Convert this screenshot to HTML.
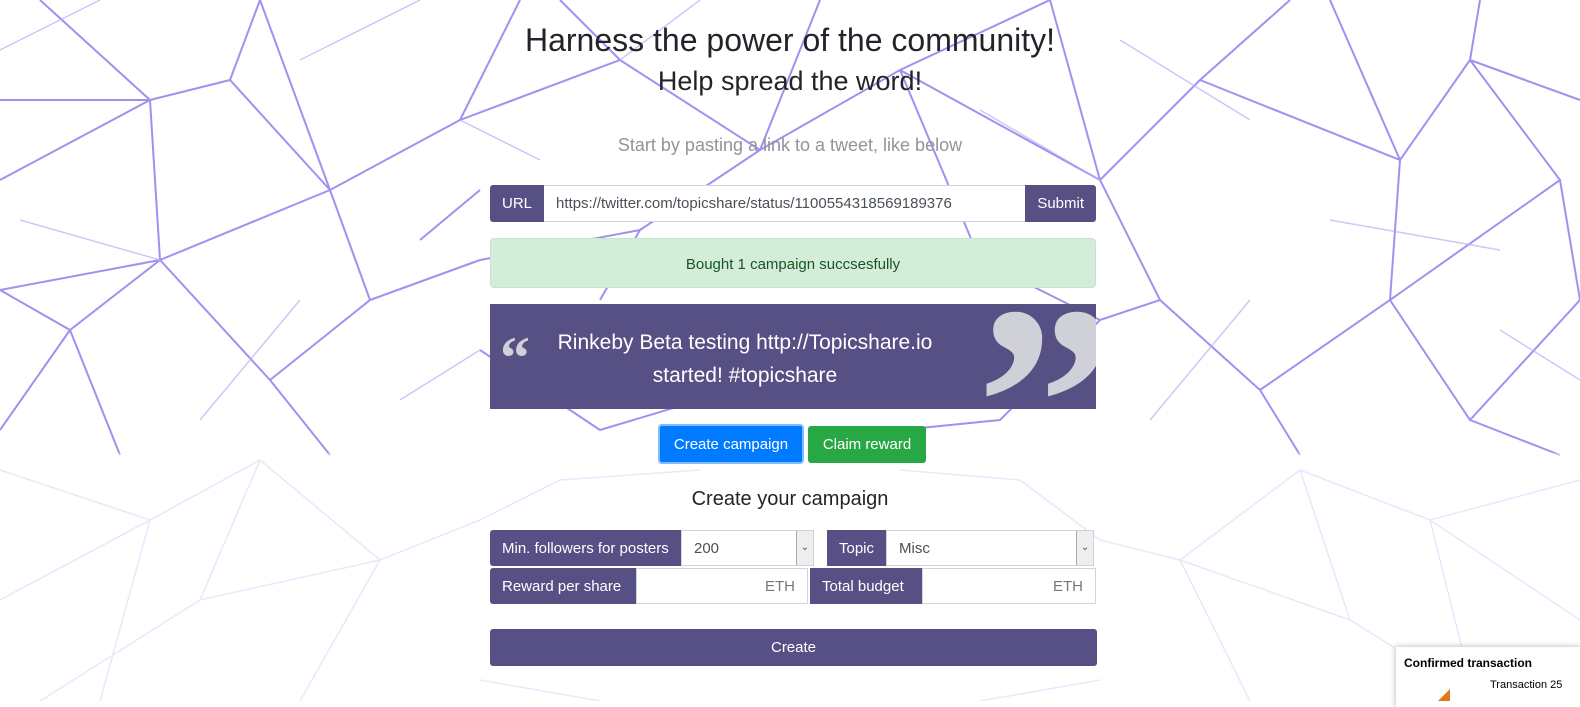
<!DOCTYPE html>
<html><head><meta charset="utf-8"><style>
body{margin:0;width:1580px;height:701px;overflow:hidden;font-family:"Liberation Sans",sans-serif;background:#fff;position:relative}
svg.bg{position:absolute;left:0;top:0}
.c{position:absolute;left:0;width:1580px;text-align:center;color:#212529}
.grp{position:absolute;display:flex;height:36px;font-size:15px}
.lab{background:#575084;color:#fff;display:flex;align-items:center;padding:0 12px;border-radius:3px 0 0 3px}
.inp{background:#fff;border:1px solid #ced4da;display:flex;align-items:center;padding:0 12px;color:#495057;box-sizing:border-box}
</style></head><body>
<svg class="bg" width="1580" height="701" viewBox="0 0 1580 701">
<g stroke="#8d80ee" stroke-width="2" fill="none" opacity="0.85">
<path d="M0 100L150 100L230 80L330 190L370 300L270 380L160 260L0 290M150 100L160 260L70 330L0 290M230 80L260 0M330 190L460 120L520 0M370 300L480 260M270 380L330 455M70 330L120 455M160 260L330 190M0 180L150 100M40 0L150 100"/>
<path d="M1580 100L1470 60L1400 160L1390 300L1260 390L1160 300L1100 180L1200 80L1290 0M1470 60L1560 180L1390 300M1560 180L1580 300L1470 420L1390 300M1200 80L1400 160M1100 180L1050 0M1160 300L1100 320M1260 390L1300 455M1470 420L1560 455M1400 160L1330 0M1160 300L1260 390"/>
<path d="M420 240L480 190M0 430L70 330M1480 0L1470 60M260 0L330 190"/>
<path d="M460 120L620 60L760 150L900 70L1050 0M620 60L560 0M760 150L820 0M900 70L1100 180M480 260L640 230L760 150M640 230L600 300M1100 320L980 260L900 70M480 350L600 430L700 400M900 430L1000 420L1100 320"/>
</g>
<g stroke="#b8b0f3" stroke-width="1.5" fill="none" opacity="0.7">
<path d="M0 50L100 0M300 60L420 0M20 220L160 260M400 400L480 350M1120 40L1250 120M1330 220L1500 250M1500 330L1580 380M200 420L300 300M1150 420L1250 300M700 0L620 60M980 110L1100 180M540 160L460 120"/>
</g>
<g stroke="#c8c1f6" stroke-width="1.5" fill="none" opacity="0.6">
<path d="M0 470L150 520L260 460L380 560L480 520M150 520L100 701M380 560L300 701M0 600L150 520M260 460L200 600L380 560M1580 480L1430 520L1300 470L1180 560L1100 540M1430 520L1470 680M1180 560L1250 701M1300 470L1350 620L1180 560M1580 620L1430 520M40 701L200 600M1350 620L1480 701M480 520L560 480L700 470M900 470L1020 480L1100 540M480 680L600 701M1100 680L980 701"/>
</g>
<rect x="0" y="453" width="1580" height="248" fill="#fff" opacity="0.35"/>
</svg>
<div class="c" style="top:22px;font-size:32px">Harness the power of the community!</div>
<div class="c" style="top:66px;font-size:27px">Help spread the word!</div>
<div class="c" style="top:135px;font-size:18px;color:#8e959c">Start by pasting a link to a tweet, like below</div>
<div class="grp" style="left:490px;top:185px;width:606px;height:37px">
<div class="lab">URL</div>
<div class="inp" style="flex:1;border-left:0;border-right:0">https://twitter.com/topicshare/status/1100554318569189376</div>
<div class="lab" style="border-radius:0 3px 3px 0">Submit</div></div>
<div style="position:absolute;left:490px;top:238px;width:604px;height:48px;background:#d4edda;border:1px solid #c3e6cb;border-radius:4px;color:#155724;font-size:15px;text-align:center;line-height:52px">Bought 1 campaign succsesfully</div>
<div style="position:absolute;left:490px;top:304px;width:606px;height:105px;background:#575084;overflow:hidden">
<div style="position:absolute;left:10px;top:20px;font-family:'Liberation Serif',serif;font-size:60px;color:#d0d0d8;font-weight:bold">“</div>
<div style="position:absolute;right:-20px;top:-40px;font-family:'Liberation Serif',serif;font-size:280px;color:#d0d0d8;font-weight:bold;line-height:1">”</div>
<div style="position:absolute;left:55px;width:400px;top:22px;color:#fff;font-size:21px;text-align:center;line-height:33px">Rinkeby Beta testing http://Topicshare.io started! #topicshare</div></div>
<div style="position:absolute;left:658px;top:424px;height:36px;background:#007bff;border:2px solid #80bdff;border-radius:4px;color:#fff;font-size:15px;text-align:center;line-height:38px;width:142px">Create campaign</div>
<div style="position:absolute;left:808px;top:426px;width:118px;height:37px;background:#28a745;border-radius:3px;color:#fff;font-size:15px;text-align:center;line-height:37px">Claim reward</div>
<div class="c" style="top:488px;font-size:20px">Create your campaign</div>
<div class="grp" style="left:490px;top:530px">
<div class="lab" style="width:179px;padding:0 0 0 12px">Min. followers for posters</div>
<div class="inp" style="width:133px;justify-content:space-between;padding-right:0">200<span style="width:16px;height:34px;background:#eee;border-left:1px solid #aaa;font-size:10px;line-height:34px;text-align:center">⌄</span></div></div>
<div class="grp" style="left:827px;top:530px">
<div class="lab" style="border-radius:0">Topic</div>
<div class="inp" style="width:208px;justify-content:space-between;padding-right:0">Misc<span style="width:16px;height:34px;background:#eee;border-left:1px solid #aaa;font-size:10px;line-height:34px;text-align:center">⌄</span></div></div>
<div class="grp" style="left:490px;top:568px">
<div class="lab" style="width:122px">Reward per share</div>
<div class="inp" style="width:172px;justify-content:flex-end;color:#777">ETH</div></div>
<div class="grp" style="left:810px;top:568px">
<div class="lab" style="width:88px;border-radius:0">Total budget</div>
<div class="inp" style="width:174px;justify-content:flex-end;color:#777">ETH</div></div>
<div style="position:absolute;left:490px;top:629px;width:607px;height:37px;background:#575084;border-radius:3px;color:#fff;font-size:15px;text-align:center;line-height:37px">Create</div>
<div style="position:absolute;left:1396px;top:647px;width:184px;height:60px;background:#fff;box-shadow:0 0 6px rgba(0,0,0,.3)">
<div style="position:absolute;left:8px;top:9px;font-size:12px;font-weight:bold">Confirmed transaction</div>
<div style="position:absolute;left:94px;top:32px;font-size:11px">Transaction 25</div>
<div style="position:absolute;left:30px;top:42px;width:0;height:0;border-left:12px solid transparent;border-right:12px solid #e2761b;border-top:12px solid transparent"></div></div>
</body></html>
